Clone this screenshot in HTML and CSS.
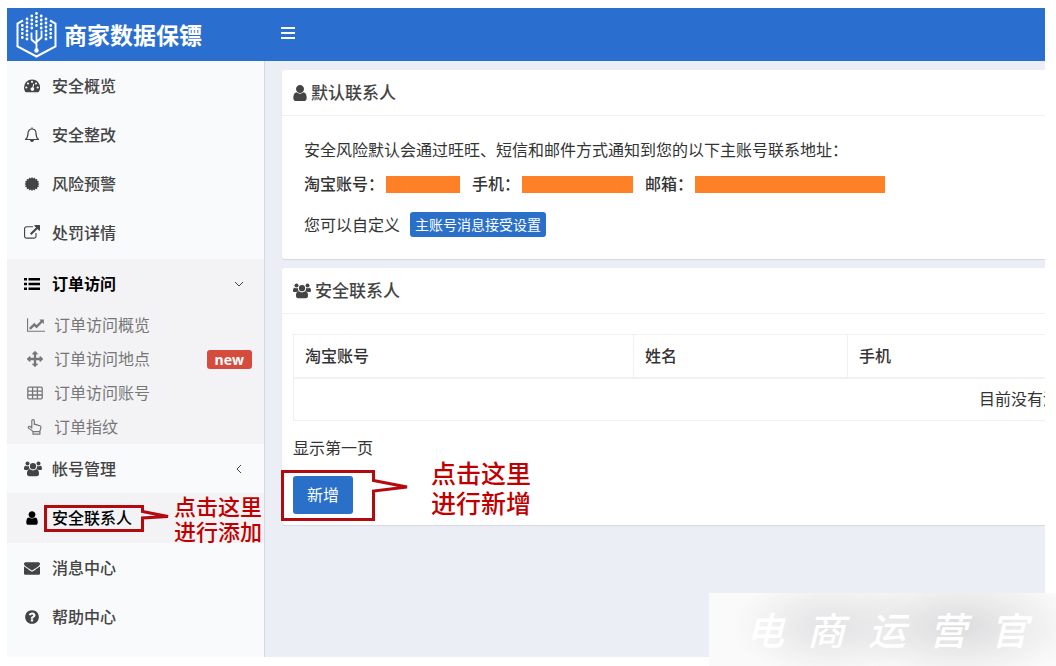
FILE: index.html
```html
<!DOCTYPE html>
<html lang="zh-CN">
<head>
<meta charset="utf-8">
<title>商家数据保镖</title>
<link rel="stylesheet" href="styles.css">
</head>
<body>
<svg class="sprite" aria-hidden="true">
  <symbol id="i-user" viewBox="0 0 1792 1792"><path id="p-user" d="M1536 1399q0 109-62.500 187t-150.500 78h-854q-88 0-150.500-78t-62.500-187q0-85 8.500-160.500t31.500-152 58.500-131 94-89 134.500-34.500q131 128 313 128t313-128q76 0 134.500 34.500t94 89 58.500 131 31.500 152 8.500 160.500zm-256-887q0 159-112.500 271.500t-271.500 112.500-271.500-112.500-112.500-271.500 112.500-271.500 271.500-112.500 271.500 112.500 112.500 271.500z"/></symbol>
  <symbol id="i-link" viewBox="0 0 1792 1792"><path d="M1408 928v320q0 119-84.500 203.500t-203.500 84.500h-832q-119 0-203.500-84.500t-84.500-203.500v-832q0-119 84.500-203.500t203.500-84.500h704q14 0 23 9t9 23v64q0 14-9 23t-23 9h-704q-66 0-113 47t-47 113v832q0 66 47 113t113 47h832q66 0 113-47t47-113v-320q0-14 9-23t23-9h64q14 0 23 9t9 23zm384-864v512q0 26-19 45t-45 19-45-19l-176-176-652 652q-10 10-23 10t-23-10l-114-114q-10-10-10-23t10-23l652-652-176-176q-19-19-19-45t19-45 45-19h512q26 0 45 19t19 45z"/></symbol>
  <symbol id="i-chart" viewBox="0 0 2048 1792"><path d="M2048 1536v128h-2048v-1536h128v1408h1920zm-128-1248v435q0 21-19.500 29.500t-35.500-7.500l-121-121-633 633q-10 10-23 10t-23-10l-233-233-416 416-192-192 585-585q10-10 23-10t23 10l233 233 464-464-121-121q-16-16-7.500-35.500t29.500-19.500h435q14 0 23 9t9 23z"/></symbol>
  <symbol id="i-arrows" viewBox="0 0 1792 1792"><path d="M1792 896q0 26-19 45l-256 256q-19 19-45 19t-45-19-19-45v-128h-384v384h128q26 0 45 19t19 45-19 45l-256 256q-19 19-45 19t-45-19l-256-256q-19-19-19-45t19-45 45-19h128v-384h-384v128q0 26-19 45t-45 19-45-19l-256-256q-19-19-19-45t19-45l256-256q19-19 45-19t45 19 19 45v128h384v-384h-128q-26 0-45-19t-19-45 19-45l256-256q19-19 45-19t45 19l256 256q19 19 19 45t-19 45-45 19h-128v384h384v-128q0-26 19-45t45-19 45 19l256 256q19 19 19 45z"/></symbol>
  <symbol id="i-mail" viewBox="0 0 1792 1792"><path d="M1792 710v794q0 66-47 113t-113 47h-1472q-66 0-113-47t-47-113v-794q44 49 101 87 362 246 497 345 57 42 92.500 65.500t94.500 48 110 24.500h2q51 0 110-24.500t94.500-48 92.500-65.500q170-123 498-345 57-39 100-87zm0-294q0 79-49 151t-122 123q-376 261-468 325-10 7-42.500 31t-54 38.500-52 32.500-57.500 27-50 9h-2q-23 0-50-9t-57.500-27-52-32.500-54-38.500-42.500-31q-91-64-262-182.500t-205-142.500q-62-42-117-115.500t-55-136.500q0-78 41.500-130t118.500-52h1472q65 0 112.500 47t47.500 113z"/></symbol>
  <symbol id="i-help" viewBox="0 0 1792 1792"><path d="M1024 1376v-192q0-14-9-23t-23-9h-192q-14 0-23 9t-9 23v192q0 14 9 23t23 9h192q14 0 23-9t9-23zm256-672q0-88-55.500-163t-138.500-116-170-41q-243 0-371 213-15 24 8 42l132 100q7 6 19 6 16 0 25-12 53-68 86-92 34-24 86-24 48 0 85.500 26t37.500 59q0 38-20 61t-68 45q-63 28-115.500 86.500t-52.500 125.500v36q0 14 9 23t23 9h192q14 0 23-9t9-23q0-19 21.500-49.500t54.500-49.500q32-18 49-28.500t46-35 44.500-48 28-60.500 12.500-81zm384 192q0 209-103 385.500t-279.500 279.500-385.500 103-385.500-103-279.500-279.500-103-385.500 103-385.500 279.500-279.500 385.500-103 385.500 103 279.500 279.500 103 385.500z"/></symbol>
  <symbol id="i-gauge" viewBox="0 0 16 16"><path fill-rule="evenodd" d="M8 1.500a8 8 0 0 0-8 8c0 1.600.4 3.100 1.200 4.300.2.300.4.400.7.400h12.200c.3 0 .5-.1.700-.4A8 8 0 0 0 8 1.500zM2.300 8.400a1.100 1.100 0 1 1 0 2.200 1.100 1.100 0 0 1 0-2.200zM4 4.400a1.100 1.100 0 1 1 0 2.200 1.100 1.100 0 0 1 0-2.200zM8 2.700a1.100 1.100 0 1 1 0 2.200 1.100 1.100 0 0 1 0-2.200zM12 4.400a1.100 1.100 0 1 1 0 2.200 1.100 1.100 0 0 1 0-2.200zM13.700 8.400a1.100 1.100 0 1 1 0 2.200 1.100 1.100 0 0 1 0-2.200zM9.300 5.800l1 .3-.9 3.500a1.800 1.800 0 1 1-1-.3z"/></symbol>
  <symbol id="i-bell" viewBox="0 0 16 16"><path d="M8 2C5.400 2 4 4 4 6.300c0 3.200-.9 4.900-2.500 6.200h13C12.900 11.200 12 9.500 12 6.300 12 4 10.600 2 8 2zM8 .6V2" fill="none" stroke="currentColor" stroke-width="1.200" stroke-linejoin="round"/><path d="M6 13h4a2 2 0 0 1-4 0z"/></symbol>
  <symbol id="i-cert" viewBox="0 0 16 16"><path d="M8 1l1.100 1.500L10.700 1.500l.6 1.800 1.900-.4v1.900l1.800.6-.9 1.600L15.500 8l-1.400 1.100.9 1.600-1.800.6v1.900l-1.900-.4-.6 1.800-1.600-1L8 15l-1.100-1.400-1.600 1-.6-1.800-1.900.4v-1.900L1 10.700l.9-1.600L.5 8l1.400-1L1 5.400l1.800-.6V2.900l1.900.4.600-1.800 1.600 1z"/></symbol>
  <symbol id="i-list" viewBox="0 0 16 16"><path d="M0 2h3v2.500H0zM4.500 2H16v2.500H4.500zM0 6.800h3v2.500H0zM4.500 6.800H16v2.500H4.500zM0 11.500h3V14H0zM4.500 11.500H16V14H4.500z"/></symbol>
  <symbol id="i-table" viewBox="0 0 16 16"><path d="M1.800 2.200h12.400a1 1 0 0 1 1 1v9.600a1 1 0 0 1-1 1H1.800a1 1 0 0 1-1-1V3.200a1 1 0 0 1 1-1zM1 6.200h14M1 10h14M5.600 2.500v11M10.400 2.500v11" fill="none" stroke="currentColor" stroke-width="1.300"/></symbol>
  <symbol id="i-hand" viewBox="0 0 16 16"><path d="M4.800 9V1.900c0-1.700 2.500-1.700 2.500 0v3.700c.8-.5 1.900-.3 2.300.5.900-.5 1.900-.1 2.200.6 1.300-.4 2.100.3 2.100 1.600 0 1.900-1 2.700-1 4v2.900H6v-2.500c-1-1.500-2-2.200-3.700-3C.8 9 1 7.400 2.400 7.400c1 0 1.700.8 2.400 1.600zM6 12.600h6.900" fill="none" stroke="currentColor" stroke-width="1.200" stroke-linejoin="round"/></symbol>
  <symbol id="i-users" viewBox="0 0 18 16"><circle cx="3.500" cy="2.600" r="2"/><circle cx="14.500" cy="2.600" r="2"/><circle cx="9" cy="5.200" r="3.100"/><path d="M1.800 4.700c1 .7 2.400.8 3.200.2-.2 1.200.1 2.300.9 3.200-1 0-1.800.4-2.300 1H1.500C.6 9.100 0 8.700 0 7.700c0-1.500.4-3 1.800-3zM16.200 4.700c-1 .7-2.400.8-3.200.2.200 1.200-.1 2.300-.9 3.200 1 0 1.800.4 2.300 1h2.100c.9 0 1.500-.4 1.500-1.400 0-1.500-.4-3-1.800-3zM5.800 8.300c2 1.500 4.400 1.500 6.400 0 2.300 0 2.800 2.500 2.800 4.700 0 1.300-.9 2.200-2.200 2.200H5.200C3.900 15.200 3 14.300 3 13c0-2.200.5-4.700 2.800-4.700z"/></symbol>
</svg>

<div class="app">
  <header class="topbar">
    <a class="brand" href="#">
      <svg class="logo" viewBox="0 0 41 46" aria-hidden="true">
        <path d="M7 8.500L1.500 11.500v23L20.500 44.500l19-10v-23L34 8.500" fill="none" stroke="currentColor" stroke-width="2"/>
        <path d="M20.500 38V18M20.500 32l-5-4.500v-7M20.500 30l5-4.500v-7" fill="none" stroke="currentColor" stroke-width="1.800"/>
        <circle cx="20.500" cy="38.500" r="2.200"/>
        <path d="M20.500 1.500v16M15.800 4v15M25.200 4v13M11 7v22M30 7v22M6.300 13.500v14M34.700 13.500v14" fill="none" stroke="currentColor" stroke-width="2.800" stroke-linecap="round" stroke-dasharray="0 4"/>
      </svg>
      <span>商家数据保镖</span>
    </a>
    <button class="toggle" type="button" aria-label="切换菜单"><span></span><span></span><span></span></button>
  </header>

  <div class="columns">
    <nav class="sidebar">
      <ul class="menu">
        <li><a class="item" href="#"><svg class="icon"><use href="#i-gauge"/></svg>安全概览</a></li>
        <li><a class="item" href="#"><svg class="icon"><use href="#i-bell"/></svg>安全整改</a></li>
        <li><a class="item" href="#"><svg class="icon"><use href="#i-cert"/></svg>风险预警</a></li>
        <li><a class="item" href="#"><svg class="icon"><use href="#i-link"/></svg>处罚详情</a></li>
        <li class="group">
          <a class="item current" href="#"><svg class="icon"><use href="#i-list"/></svg>订单访问<svg class="chevron" viewBox="0 0 10 10"><path d="M1 3l4 4 4-4"/></svg></a>
          <ul class="submenu">
            <li><a href="#"><svg class="icon wide"><use href="#i-chart"/></svg>订单访问概览</a></li>
            <li><a href="#"><svg class="icon"><use href="#i-arrows"/></svg>订单访问地点<span class="badge">new</span></a></li>
            <li><a href="#"><svg class="icon"><use href="#i-table"/></svg>订单访问账号</a></li>
            <li><a href="#"><svg class="icon"><use href="#i-hand"/></svg>订单指纹</a></li>
          </ul>
        </li>
        <li><a class="item" href="#"><svg class="icon wide"><use href="#i-users"/></svg>帐号管理<svg class="chevron" viewBox="0 0 10 10"><path d="M7 1L3 5l4 4"/></svg></a></li>
        <li class="marked">
          <a class="item current" href="#"><svg class="icon"><use href="#i-user"/></svg>安全联系人</a>
          <div class="note note-side">
            <svg width="130" height="28" viewBox="0 0 130 28" aria-hidden="true"><path d="M1.500 1.500H98.500V6.500L124 11.500 98.500 13V25.500H1.500z"/></svg>
            <p>点击这里<br>进行添加</p>
          </div>
        </li>
        <li><a class="item" href="#"><svg class="icon"><use href="#i-mail"/></svg>消息中心</a></li>
        <li><a class="item" href="#"><svg class="icon"><use href="#i-help"/></svg>帮助中心</a></li>
      </ul>
    </nav>

    <main class="content">
      <section class="panel">
        <h2><svg class="icon slim" viewBox="256 128 1280 1536"><use href="#p-user"/></svg>默认联系人</h2>
        <div class="contact">
          <p>安全风险默认会通过旺旺、短信和邮件方式通知到您的以下主账号联系地址：</p>
          <dl class="fields">
            <div><dt>淘宝账号：</dt><dd class="mask mask-account"></dd></div>
            <div><dt>手机：</dt><dd class="mask mask-phone"></dd></div>
            <div><dt>邮箱：</dt><dd class="mask mask-mail"></dd></div>
          </dl>
          <div class="custom"><span>您可以自定义</span><button class="btn btn-small" type="button">主账号消息接受设置</button></div>
        </div>
      </section>

      <section class="panel">
        <h2><svg class="icon wide"><use href="#i-users"/></svg>安全联系人</h2>
        <div class="people">
          <table>
            <colgroup><col class="col-account"><col class="col-name"><col></colgroup>
            <thead><tr><th>淘宝账号</th><th>姓名</th><th>手机</th></tr></thead>
            <tbody><tr><td colspan="3">目前没有添加数据</td></tr></tbody>
          </table>
          <p class="pager">显示第一页</p>
          <div class="actions">
            <button class="btn" type="button">新增</button>
            <div class="note note-add">
              <svg width="132" height="52" viewBox="0 0 132 52" aria-hidden="true"><path d="M1.500 1.500H92.500V10.500L126 17 92.500 21V49.500H1.500z"/></svg>
              <p>点击这里<br>进行新增</p>
            </div>
          </div>
        </div>
      </section>
    </main>
  </div>
</div>

<div class="watermark"><span>电</span><span>商</span><span>运</span><span>营</span><span>官</span></div>
</body>
</html>
```

FILE: styles.css
```css
* {
  box-sizing: border-box;
}

body {
  margin: 0;
  background: #fff;
  color: #333;
  font: 16px/24px "Noto Sans", "Noto Sans CJK SC", sans-serif;
}

p,
h2,
ul,
dl,
dd {
  margin: 0;
  padding: 0;
}

ul {
  list-style: none;
}

a {
  color: inherit;
  text-decoration: none;
}

button {
  border: 0;
  font: inherit;
  cursor: pointer;
}

.sprite {
  position: absolute;
  width: 0;
  height: 0;
}

.app {
  display: flex;
  flex-direction: column;
  min-height: 100vh;
  padding: 8px 11px 9px 7px;
}

/* Top bar */

.topbar {
  display: flex;
  align-items: center;
  height: 53px;
  background: #2a6fcf;
  color: #fff;
}

.brand {
  display: flex;
  align-items: center;
  gap: 7px;
  width: 258px;
  padding-left: 9px;
  font-size: 23px;
  font-weight: 700;
}

.logo {
  width: 41px;
  height: 46px;
  fill: currentColor;
}

.toggle {
  display: grid;
  gap: 3px;
  margin-left: 8px;
  padding: 6px 8px 10px;
  background: none;
}

.toggle span {
  width: 14px;
  height: 2px;
  background: #fff;
}

/* Sidebar */

.columns {
  display: flex;
  flex: 1;
}

.sidebar {
  flex: none;
  width: 258px;
  border-right: 1px solid #d3d8e2;
  background: #f9fafc;
}

.icon {
  flex: none;
  width: 16px;
  height: 16px;
  fill: currentColor;
}

.icon.wide {
  width: 18px;
}

.icon.slim {
  width: 14px;
}

.item {
  display: flex;
  align-items: center;
  height: 49px;
  padding: 0 20px 0 17px;
  color: #444;
  font-weight: 500;
}

.item .icon {
  margin-right: 12px;
}

.item .icon.wide {
  margin-right: 10px;
}

.current {
  color: #000;
  font-weight: 700;
}

.marked .current {
  font-weight: 500;
}

.chevron {
  width: 10px;
  height: 10px;
  margin-left: auto;
  fill: none;
  stroke: #444;
}

.group {
  margin-top: 2px;
  background: #f3f3f5;
}

.submenu a {
  display: flex;
  align-items: center;
  height: 34px;
  padding: 0 12px 0 20px;
  color: #777;
}

.submenu .icon {
  margin-right: 11px;
}

.submenu .icon.wide {
  margin-right: 9px;
}

.badge {
  margin-left: auto;
  padding: 0 8px;
  border-radius: 3px;
  background: #d64c3c;
  color: #fff;
  font: 700 14px/19px "Open Sans", sans-serif;
}

.marked {
  position: relative;
  padding-bottom: 1px;
  background: #f3f3f5;
}

/* Callouts drawn over the page */

.note {
  position: absolute;
  display: flex;
  align-items: center;
  color: #c00000;
  font-weight: 500;
  white-space: nowrap;
  pointer-events: none;
}

.note path {
  fill: none;
  stroke: #b3090f;
  stroke-width: 3;
}

.note-side {
  top: 1px;
  left: 37px;
  font-size: 22px;
  line-height: 25px;
}

.note-add {
  top: -18px;
  left: -12px;
  align-items: flex-start;
  gap: 18px;
  font-size: 25px;
  line-height: 30px;
}

.note-add svg {
  margin-top: 12px;
}

/* Content */

.content {
  display: flex;
  flex: 1;
  flex-direction: column;
  gap: 9px;
  min-width: 0;
  padding: 9px 0 20px 17px;
  overflow: hidden;
  background: #ebeef4;
}

.panel {
  border-radius: 3px 0 0 3px;
  background: #fff;
  box-shadow: 0 1px 1px #d5d8de;
}

.panel h2 {
  display: flex;
  align-items: center;
  gap: 4px;
  height: 46px;
  padding: 0 11px;
  border-bottom: 1px solid #f1f1f3;
  color: #444;
  font-size: 17px;
  font-weight: 500;
}

.contact {
  display: grid;
  padding: 22px;
}

.fields {
  display: flex;
  gap: 12px;
  margin: 10px 0 16px;
}

.fields div {
  display: flex;
  align-items: center;
  gap: 2px;
}

.fields dt {
  font-weight: 500;
}

.mask {
  height: 17px;
  background: #ff8026;
}

.mask-account {
  width: 74px;
}

.mask-phone {
  width: 111px;
}

.mask-mail {
  width: 190px;
}

.custom {
  display: flex;
  align-items: center;
  gap: 10px;
}

.btn {
  padding: 7px 14px;
  border-radius: 3px;
  background: #2a6fc8;
  color: #fff;
}

.btn-small {
  padding: 0 5px;
  font-size: 14px;
  line-height: 25px;
}

.people {
  padding: 20px 0 11px 11px;
}

table {
  width: calc(200% - 4px);
  border: 1px solid #f1f1f3;
  border-collapse: collapse;
  table-layout: fixed;
}

.col-account {
  width: 340px;
}

.col-name {
  width: 214px;
}

th,
td {
  height: 43px;
  padding: 0 11px;
}

th {
  border: 1px solid #f1f1f3;
  border-bottom: 2px solid #f1f1f3;
  font-weight: 500;
  text-align: left;
}

td {
  text-align: center;
}

.pager {
  margin: 15px 0 16px;
}

.actions {
  position: relative;
}

/* Corner stamp */

.watermark {
  position: absolute;
  right: 0;
  bottom: 0;
  display: flex;
  gap: 23px;
  padding: 7px 28px 6px 37px;
  background:
    radial-gradient(ellipse 28% 70% at 35% 45%, #e2e2e4, transparent),
    radial-gradient(ellipse 34% 75% at 72% 45%, #dcdcde, transparent),
    #fafafa;
  color: #fff;
  font-size: 38px;
  font-style: italic;
  font-weight: 500;
  line-height: 60px;
}
```
